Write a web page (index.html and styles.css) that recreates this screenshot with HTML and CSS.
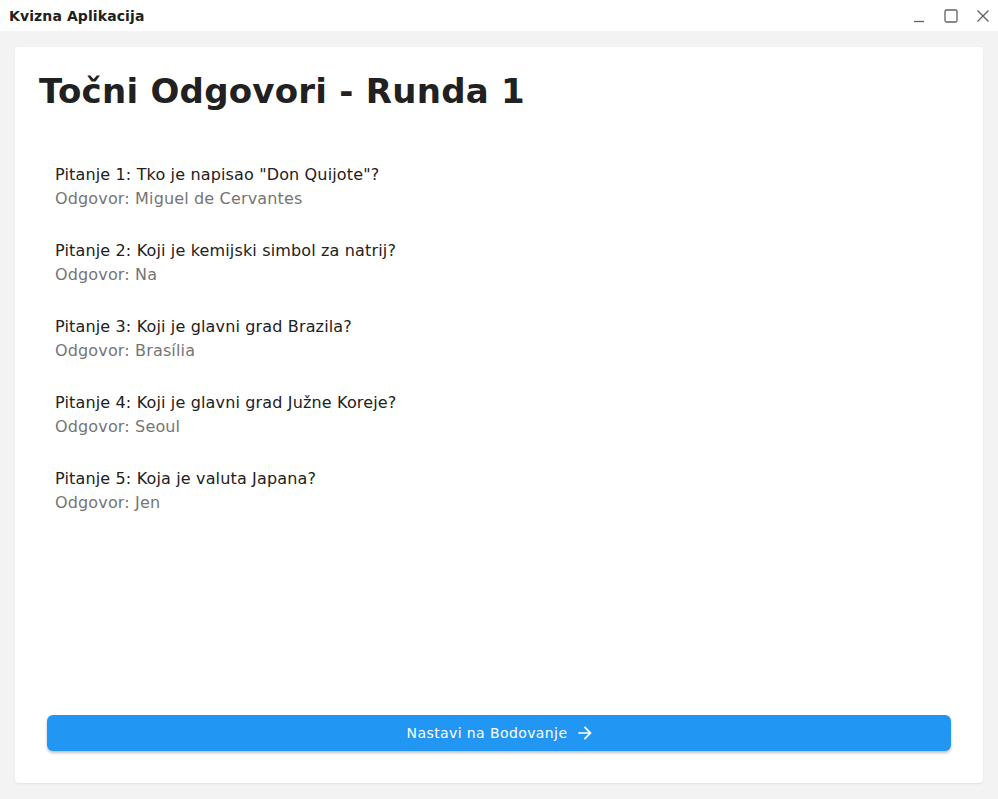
FILE: index.html
```html
<!DOCTYPE html>
<html lang="hr">
<head>
<meta charset="utf-8">
<title>Kvizna Aplikacija</title>
<link rel="stylesheet" href="styles.css">
</head>
<body>
<div class="window">
  <header class="titlebar">
    <span class="app-title">Kvizna Aplikacija</span>
    <div class="controls">
      <svg class="ctl" width="16" height="16" viewBox="0 0 16 16"><path d="M3 13.5h10" stroke="#616161" stroke-width="1.3" fill="none"/></svg>
      <svg class="ctl" width="16" height="16" viewBox="0 0 16 16"><rect x="2" y="2" width="12" height="12" rx="1.5" stroke="#616161" stroke-width="1.3" fill="none"/></svg>
      <svg class="ctl" width="16" height="16" viewBox="0 0 16 16"><path d="M2.5 2.5l11 11M13.5 2.5l-11 11" stroke="#616161" stroke-width="1.3" fill="none"/></svg>
    </div>
  </header>
  <main class="content">
    <section class="card">
      <h1 class="heading">Točni Odgovori - Runda 1</h1>
      <ul class="qa-list">
        <li class="qa"><div class="q">Pitanje 1: Tko je napisao "Don Quijote"?</div><div class="a">Odgovor: Miguel de Cervantes</div></li>
        <li class="qa"><div class="q">Pitanje 2: Koji je kemijski simbol za natrij?</div><div class="a">Odgovor: Na</div></li>
        <li class="qa"><div class="q">Pitanje 3: Koji je glavni grad Brazila?</div><div class="a">Odgovor: Brasília</div></li>
        <li class="qa"><div class="q">Pitanje 4: Koji je glavni grad Južne Koreje?</div><div class="a">Odgovor: Seoul</div></li>
        <li class="qa"><div class="q">Pitanje 5: Koja je valuta Japana?</div><div class="a">Odgovor: Jen</div></li>
      </ul>
      <button class="next-btn" type="button">
        <span>Nastavi na Bodovanje</span>
        <svg width="20" height="20" viewBox="0 0 24 24"><path d="M12 4l-1.41 1.41L16.17 11H4v2h12.17l-5.58 5.59L12 20l8-8z" fill="#fff"/></svg>
      </button>
    </section>
  </main>
</div>
</body>
</html>
```
FILE: styles.css
```css
html, body {
  margin: 0;
  padding: 0;
  height: 100%;
}
body {
  font-family: "DejaVu Sans", sans-serif;
  background: #f3f3f3;
}
.window {
  display: flex;
  flex-direction: column;
  height: 799px;
}
.titlebar {
  height: 31px;
  background: #ffffff;
  display: flex;
  align-items: center;
  justify-content: space-between;
  padding: 0 7px 0 9px;
  flex: none;
}
.app-title {
  font-size: 14px;
  font-weight: bold;
  color: #212121;
  letter-spacing: 0.1px;
}
.controls {
  display: flex;
  gap: 16px;
  align-items: center;
}
.ctl {
  display: block;
}
.content {
  flex: 1;
  padding: 16px 15px 16px 15px;
  display: flex;
  min-height: 0;
}
.card {
  flex: 1;
  background: #ffffff;
  border-radius: 4px;
  box-shadow: 0 1px 2px rgba(0,0,0,0.08);
  display: flex;
  flex-direction: column;
  padding: 24px 24px 32px 24px;
}
.heading {
  margin: 0;
  font-size: 34px;
  font-weight: bold;
  color: #212121;
  line-height: 40px;
  letter-spacing: 0.25px;
}
.qa-list {
  list-style: none;
  margin: 0;
  padding: 52px 0 0 16px;
  flex: 1;
  display: flex;
  flex-direction: column;
  gap: 28px;
}
.qa {
  font-size: 16px;
  line-height: 24px;
  letter-spacing: 0.15px;
}
.q {
  color: #212121;
}
.a {
  color: #757575;
}
.next-btn {
  margin: 0 8px;
  height: 36px;
  border: none;
  border-radius: 6px;
  background: #2196f3;
  color: #ffffff;
  font-family: "DejaVu Sans", sans-serif;
  font-size: 14px;
  letter-spacing: 0.4px;
  display: flex;
  align-items: center;
  justify-content: center;
  gap: 8px;
  box-shadow: 0 2px 3px rgba(0,0,0,0.25);
  padding: 0 16px 0 20px;
}
.next-btn svg {
  display: block;
}
```
